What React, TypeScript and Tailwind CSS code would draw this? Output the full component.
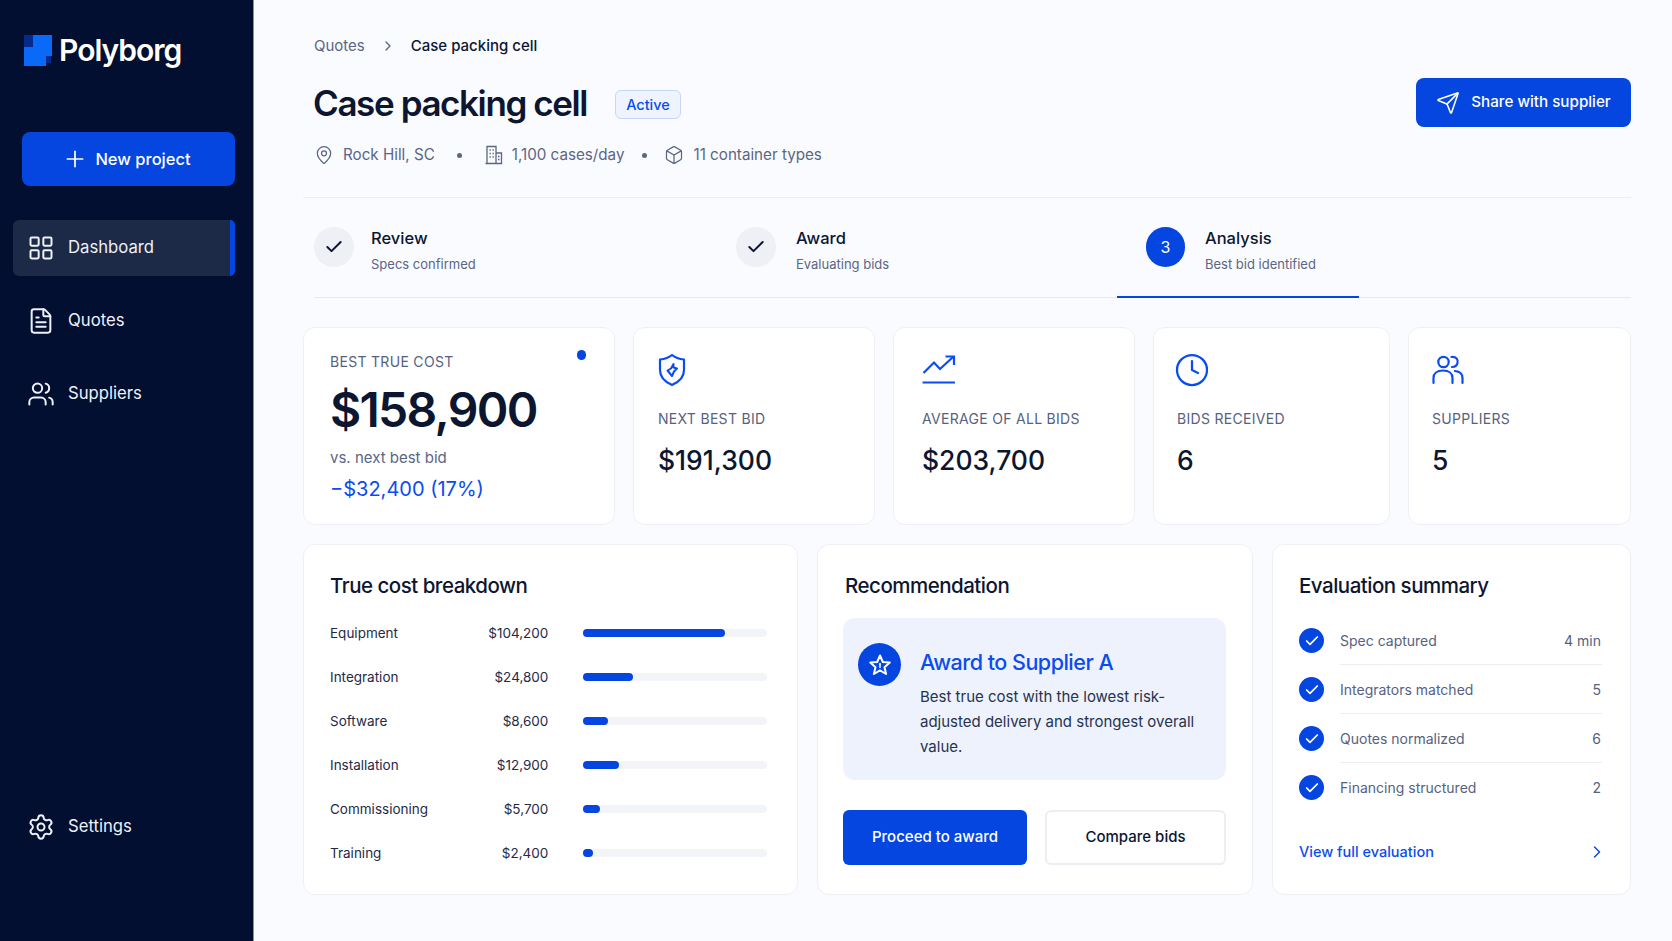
import { Plus, LayoutGrid, FileText, Users, Settings, MapPin, Box, Send, Check, ChevronRight, Clock } from 'lucide-react'

const breakdown = [
  { label: 'Equipment', amount: '$104,200', pct: 'w-[77%]' },
  { label: 'Integration', amount: '$24,800', pct: 'w-[27%]' },
  { label: 'Software', amount: '$8,600', pct: 'w-[13.5%]' },
  { label: 'Installation', amount: '$12,900', pct: 'w-[19.5%]' },
  { label: 'Commissioning', amount: '$5,700', pct: 'w-[9%]' },
  { label: 'Training', amount: '$2,400', pct: 'w-[5%]' },
]

const evaluation = [
  { label: 'Spec captured', value: '4 min' },
  { label: 'Integrators matched', value: '5' },
  { label: 'Quotes normalized', value: '6' },
  { label: 'Financing structured', value: '2' },
]

function Logo() {
  return (
    <svg width="28" height="31" viewBox="0 0 28 31" className="shrink-0">
      <rect x="0" y="0" width="9" height="12" fill="#062a8c" />
      <rect x="22" y="21" width="5" height="7" fill="#062a8c" />
      <path d="M9 0H28V21H22V31H0V12H9Z" fill="#0a6af8" />
    </svg>
  )
}

function BuildingIcon() {
  return (
    <svg width="20" height="20" viewBox="0 0 20 20" fill="none" stroke="currentColor" strokeWidth="1.3" className="mr-[8px]">
      <path d="M3 18.5 V1.5 H12 V18.5" />
      <path d="M12 8 H17.5 V18.5 H1.5" />
      <path d="M5.5 5 H6.8 M8.5 5 H9.8 M5.5 8.5 H6.8 M8.5 8.5 H9.8 M5.5 12 H6.8 M8.5 12 H9.8 M14 11.5 H15.5 M14 14.5 H15.5" />
    </svg>
  )
}

function ShieldIcon() {
  return (
    <svg width="28" height="34" viewBox="0 0 28 34" fill="none" stroke="#0a4cf0" strokeWidth="2.2" strokeLinejoin="round">
      <path d="M14 2 C17 4.5 21 6 26 6.5 V17 C26 24 21 29 14 32 C7 29 2 24 2 17 V6.5 C7 6 11 4.5 14 2Z" />
      <path d="M15.5 11 L15.5 14.5 L19 15.5 L16 18.5 L14 23 L9.5 17.5 L13 15.5Z" strokeWidth="2" />
    </svg>
  )
}

function TrendIcon() {
  return (
    <svg width="34" height="30" viewBox="0 0 34 30" fill="none" stroke="#0a4cf0" strokeWidth="2.2">
      <path d="M1.5 18 L12 7.5 L18 14 L31 2" />
      <path d="M23.5 1.5 H32 V10" />
      <path d="M0.5 27.5 H33" />
    </svg>
  )
}

function PeopleIcon() {
  return (
    <svg width="32" height="30" viewBox="0 0 32 30" fill="none" stroke="#0a4cf0" strokeWidth="2.2" strokeLinecap="round">
      <circle cx="11.5" cy="7" r="5.2" />
      <path d="M19.5 2 C24 1.5 26.5 4.5 25.5 8 C25 10.5 22.5 12 20 12" />
      <path d="M1.5 28 V23 C1.5 18.5 5 15.5 11 15.5 C17 15.5 20.5 18.5 20.5 23 V28" />
      <path d="M23 16 C27.5 16.5 30.5 19 30.5 23 V28" />
    </svg>
  )
}

function StarBadge() {
  return (
    <div className="mt-[2px] w-[43px] h-[43px] shrink-0 rounded-full bg-[#0546e0] flex items-center justify-center">
      <svg width="24" height="24" viewBox="0 0 24 24" fill="none" stroke="#fff" strokeWidth="2" strokeLinejoin="round">
        <path d="M12 2.5 L14.8 9 L21.8 9.6 L16.5 14.2 L18.1 21 L12 17.4 L5.9 21 L7.5 14.2 L2.2 9.6 L9.2 9Z" />
        <circle cx="12" cy="11" r="1.1" fill="#fff" stroke="none" />
        <path d="M12 11.5 V15" strokeWidth="1.5" />
      </svg>
    </div>
  )
}

function NavItem({ icon, label, active }: { icon: React.ReactNode; label: string; active?: boolean }) {
  return (
    <div className={`relative h-[56px] ml-[13px] w-[222px] pl-[14px] flex items-center gap-[13px] rounded-md text-[16.7px] text-[#eef1f7] ${active ? 'bg-[#1c2a47]' : ''}`}>
      {icon}
      <span>{label}</span>
      {active && <div className="absolute right-0 top-0 bottom-0 w-[5px] rounded-r-md bg-[#0546e0]" />}
    </div>
  )
}

function Step({ width, gap, done, num, title, sub }: { width: string; gap: string; done?: boolean; num?: string; title: string; sub: string }) {
  return (
    <div className={`flex items-start ${gap} ${width}`}>
      {done ? (
        <div className="w-[40px] h-[40px] rounded-full bg-[#eef0f5] flex items-center justify-center">
          <Check size={20} strokeWidth={2.4} className="text-[#0d1630]" />
        </div>
      ) : (
        <div className="w-[39px] h-[40px] rounded-full bg-[#0546e0] flex items-center justify-center text-white text-[16px]">{num}</div>
      )}
      <div>
        <div className="text-[16.5px] leading-[22px] font-medium text-[#0d1630]">{title}</div>
        <div className="text-[13px] leading-[18px] mt-[6px] text-[#5a6684]">{sub}</div>
      </div>
    </div>
  )
}

function Stat({ width, pad, icon, label, value }: { width: string; pad: string; icon: React.ReactNode; label: string; value: string }) {
  return (
    <div className={`${width} ${pad} bg-white rounded-xl border border-[#eef0f5] pt-[25px]`}>
      <div className="h-[34px] flex items-center">{icon}</div>
      <div className="mt-[22px] text-[14px] leading-[20px] tracking-[0.3px] text-[#56627f]">{label}</div>
      <div className="mt-[13px] text-[26.5px] leading-[36px] font-medium text-[#0d1630]">{value}</div>
    </div>
  )
}

export default function App() {
  return (
    <div className="flex w-[1672px] h-[941px] overflow-hidden bg-[#fafbfe] font-['Inter',sans-serif]">
      <aside className="w-[254px] shrink-0 bg-[#020f30] border-r border-[#8a8f9c] flex flex-col">
        <div className="pl-[24px] pt-[32px] flex items-center gap-[7px] h-[68px]">
          <Logo />
          <span className="text-[30px] font-semibold tracking-[-1px] text-white">Polyborg</span>
        </div>
        <button className="ml-[22px] mt-[64px] w-[213px] h-[54px] pr-[4px] rounded-lg bg-[#0546e0] text-white text-[16.5px] font-medium flex items-center justify-center gap-[7px]">
          <Plus size={26} strokeWidth={1.6} />
          New project
        </button>
        <nav className="mt-[34px] flex flex-col gap-[17px]">
          <NavItem active icon={<LayoutGrid size={28} strokeWidth={1.7} />} label="Dashboard" />
          <NavItem icon={<FileText size={28} strokeWidth={1.7} />} label="Quotes" />
          <NavItem icon={<Users size={28} strokeWidth={1.7} />} label="Suppliers" />
        </nav>
        <div className="mt-auto mb-[86px]">
          <NavItem icon={<Settings size={28} strokeWidth={1.7} />} label="Settings" />
        </div>
      </aside>

      <main className="flex-1 pl-[49px] pr-[41px]">
        <div className="pl-[11px] pt-[36px] flex items-center text-[15px] leading-[20px]">
          <span className="text-[#5a6684]">Quotes</span>
          <ChevronRight size={16} className="mx-[15px] text-[#5a6684]" />
          <span className="font-medium text-[#0d1630]">Case packing cell</span>
        </div>

        <div className="flex items-start justify-between pl-[11px] mt-[22px]">
          <div>
            <div className="flex items-center gap-[28px] h-[50px]">
              <h1 className="-ml-[1px] text-[35px] font-semibold tracking-[-1.4px] text-[#0d1630]">Case packing cell</h1>
              <span className="mt-[3px] h-[29px] px-[10px] flex items-center rounded-md border border-[#c5d6f8] bg-[#eef3fe] text-[14.5px] font-medium text-[#0a4cf0]">Active</span>
            </div>
            <div className="mt-[15px] flex items-center text-[15.2px] leading-[24px] text-[#5a6684]">
              <MapPin size={20} strokeWidth={1.5} className="mr-[9px]" />
              <span>Rock Hill, SC</span>
              <span className="w-[5px] h-[5px] rounded-full bg-[#5a6684] ml-[22px] mr-[22px]" />
              <BuildingIcon />
              <span>1,100 cases/day</span>
              <span className="w-[5px] h-[5px] rounded-full bg-[#5a6684] ml-[18px] mr-[17px]" />
              <Box size={20} strokeWidth={1.5} className="mr-[9px]" />
              <span>11 container types</span>
            </div>
          </div>
          <button className="w-[215px] h-[49px] rounded-lg bg-[#0546e0] text-white text-[15.2px] font-medium flex items-center justify-center gap-[11px]">
            <Send size={24} strokeWidth={1.6} />
            Share with supplier
          </button>
        </div>

        <div className="mt-[30px] border-t border-[#eceef4]" />

        <div className="ml-[11px] mt-[29px] h-[71px] border-b border-[#e6e9f0] relative flex items-start">
          <Step width="w-[422px]" gap="gap-[17px]" done title="Review" sub="Specs confirmed" />
          <Step width="w-[410px]" gap="gap-[20px]" done title="Award" sub="Evaluating bids" />
          <Step width="w-[300px]" gap="gap-[20px]" num="3" title="Analysis" sub="Best bid identified" />
          <div className="absolute left-[803px] bottom-[-1px] w-[242px] h-[2px] bg-[#0546e0]" />
        </div>

        <div className="mt-[29px] flex gap-[18px] h-[198px]">
          <div className="w-[312px] bg-white rounded-xl border border-[#eef0f5] pl-[26px] pt-[24px] relative">
            <div className="text-[14px] leading-[20px] tracking-[0.3px] text-[#56627f]">BEST TRUE COST</div>
            <div className="mt-[9px] text-[48px] leading-[58px] font-semibold tracking-[-1.7px] text-[#0d1630]">$158,900</div>
            <div className="mt-[8px] text-[15px] leading-[22px] text-[#5a6684]">vs. next best bid</div>
            <div className="mt-[6px] text-[20px] leading-[28px] text-[#0a4cf0]">−$32,400 (17%)</div>
            <div className="absolute right-[28px] top-[22px] w-[9px] h-[10px] rounded-full bg-[#0546e0]" />
          </div>
          <Stat width="w-[242px]" pad="pl-[24px]" icon={<ShieldIcon />} label="NEXT BEST BID" value="$191,300" />
          <Stat width="w-[242px]" pad="pl-[28px]" icon={<TrendIcon />} label="AVERAGE OF ALL BIDS" value="$203,700" />
          <Stat width="w-[237px]" pad="pl-[23px]" icon={<Clock size={36} strokeWidth={1.5} className="-ml-[3px] text-[#0a4cf0]" />} label="BIDS RECEIVED" value="6" />
          <Stat width="w-[223px]" pad="pl-[23px]" icon={<PeopleIcon />} label="SUPPLIERS" value="5" />
        </div>

        <div className="mt-[19px] flex gap-[19px] h-[351px]">
          <section className="w-[495px] bg-white rounded-xl border border-[#eef0f5] pl-[26px] pr-[30px] pt-[26px]">
            <h2 className="text-[20.5px] leading-[30px] font-medium tracking-[-0.5px] text-[#0d1630]">True cost breakdown</h2>
            <div className="mt-[22px] flex flex-col gap-[24px]">
              {breakdown.map((row) => (
                <div key={row.label} className="flex items-center h-[20px] text-[13.5px] text-[#1f2a48]">
                  <span className="w-[122px]">{row.label}</span>
                  <span className="w-[98px] text-right">{row.amount}</span>
                  <div className="ml-[35px] w-[185px] h-[8px] rounded-full bg-[#f3f4f8]">
                    <div className={`h-[8px] rounded-full bg-[#0546e0] ${row.pct}`} />
                  </div>
                </div>
              ))}
            </div>
          </section>

          <section className="w-[436px] bg-white rounded-xl border border-[#eef0f5] pl-[25px] pr-[26px] pt-[26px]">
            <h2 className="pl-[2px] text-[20.5px] leading-[30px] font-medium tracking-[-0.5px] text-[#0d1630]">Recommendation</h2>
            <div className="mt-[17px] h-[162px] rounded-xl bg-[#edf2fc] pl-[15px] pr-[20px] pt-[23px] flex items-start gap-[19px]">
              <StarBadge />
              <div>
                <div className="mt-[7px] text-[21.5px] leading-[28px] font-medium tracking-[-0.5px] text-[#0a4cf0]">Award to Supplier A</div>
                <p className="mt-[8px] text-[15px] leading-[25px] text-[#27324f]">Best true cost with the lowest risk-adjusted delivery and strongest overall value.</p>
              </div>
            </div>
            <div className="mt-[30px] flex gap-[18px]">
              <button className="w-[184px] h-[55px] rounded-md bg-[#0546e0] text-white text-[15px] font-medium">Proceed to award</button>
              <button className="w-[181px] h-[55px] rounded-md bg-white border-2 border-[#eceef4] text-[15px] font-medium text-[#0d1630]">Compare bids</button>
            </div>
          </section>

          <section className="w-[359px] bg-white rounded-xl border border-[#eef0f5] pl-[26px] pr-[28px] pt-[26px]">
            <h2 className="text-[20.5px] leading-[30px] font-medium tracking-[-0.5px] text-[#0d1630]">Evaluation summary</h2>
            <div className="mt-[15px]">
              {evaluation.map((row, i) => (
                <div key={row.label} className="flex items-center h-[49px] gap-[16px]">
                  <div className="w-[25px] h-[25px] rounded-full bg-[#0546e0] flex items-center justify-center shrink-0">
                    <Check size={16} strokeWidth={2.6} className="text-white" />
                  </div>
                  <div className={`flex-1 h-full flex items-center justify-between pr-[1px] text-[14px] text-[#56627f] ${i < 3 ? 'border-b border-[#eceef4]' : ''}`}>
                    <span>{row.label}</span>
                    <span>{row.value}</span>
                  </div>
                </div>
              ))}
            </div>
            <div className="mt-[29px] flex items-center justify-between text-[14.5px] font-medium text-[#0a4cf0]">
              <span>View full evaluation</span>
              <ChevronRight size={20} strokeWidth={1.8} className="-mr-[5px]" />
            </div>
          </section>
        </div>
      </main>
    </div>
  )
}
